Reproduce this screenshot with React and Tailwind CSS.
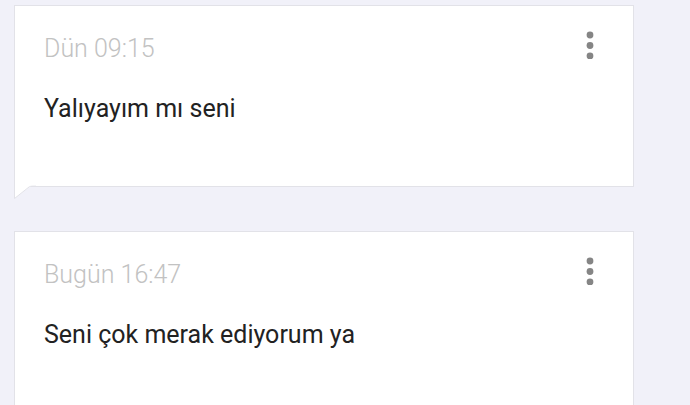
import React from "react";

function Dots() {
  return (
    <svg width="8" height="28" viewBox="0 0 8 28" className="mt-[25px] mr-[39px] shrink-0">
      <circle cx="4" cy="4" r="3.4" fill="#858585" />
      <circle cx="4" cy="14.5" r="3.4" fill="#858585" />
      <circle cx="4" cy="25" r="3.4" fill="#858585" />
    </svg>
  );
}

function Card({ date, text, tail, className }) {
  return (
    <div className={"relative ml-[14px] w-[620px] bg-white border border-[#e2e2e8] " + className}>
      <div className="flex justify-between items-start">
        <div className="pl-[29px] pt-[28px]">
          <div className="text-[25px] leading-[29px] font-light text-[#c2c2c2]">{date}</div>
          <div className="mt-[31px] text-[25px] leading-[29px] text-[#222222]">{text}</div>
        </div>
        <Dots />
      </div>
      {tail && (
        <svg
          width="22"
          height="15"
          viewBox="0 0 22 15"
          className="absolute left-[-1px] top-full mt-[-1px]"
        >
          <path d="M0.5 0 L0.5 13.5 L17 1 L19 0 Z" fill="#ffffff" />
          <path d="M0.5 0 L0.5 13.5 L15.5 1.6 Q17 0.6 19 0.6 L22 0.6" fill="none" stroke="#e2e2e8" strokeWidth="1" />
          <rect x="1" y="0" width="21" height="0.6" fill="#ffffff" />
        </svg>
      )}
    </div>
  );
}

export default function App() {
  return (
    <div
      className="w-[690px] h-[405px] overflow-hidden bg-[#f1f1f9] pt-[5px]"
      style={{ fontFamily: "Roboto, 'Noto Sans', sans-serif" }}
    >
      <Card date="Dün 09:15" text="Yalıyayım mı seni" tail className="h-[182px]" />
      <Card date="Bugün 16:47" text="Seni çok merak ediyorum ya" className="mt-[44px] h-[200px]" />
    </div>
  );
}
